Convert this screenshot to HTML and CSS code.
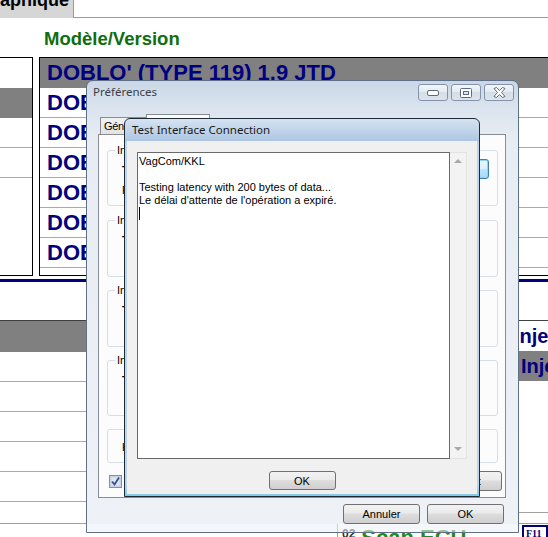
FILE: index.html
```html
<!DOCTYPE html>
<html lang="fr">
<head>
  <meta charset="UTF-8" />
  <title>Préférences - Test Interface Connection</title>
  <link rel="stylesheet" href="styles.css">
</head>
<body>
  <div class="app">
    <div class="tabstrip">
      <div class="tab"><span>Graphique</span></div>
      <div class="tab-fill"></div>
    </div>

    <h2 class="section-title">Modèle/Version</h2>

    <div class="top-panels">
      <div class="side-list">
        <div class="row"></div>
        <div class="row grey"></div>
        <div class="row line"></div>
        <div class="row line"></div>
      </div>
      <div class="model-list">
        <div class="row grey">DOBLO' (TYPE 119) 1.9 JTD</div>
        <div class="row line">DOBLO' (TYPE 119) 1.9 JTD 8V</div>
        <div class="row line">DOBLO' (TYPE 119) 1.3 JTD</div>
        <div class="row line">DOBLO' (TYPE 119) 1.2 8V</div>
        <div class="row line">DOBLO' (TYPE 119) 1.4 8V</div>
        <div class="row line">DOBLO' (TYPE 119) 1.6 16V</div>
        <div class="row line">DOBLO' (TYPE 119) 1.9 D</div>
      </div>
    </div>

    <div class="rule"></div>

    <div class="bottom-panels">
      <div class="side-list lower">
        <div class="row grey"></div>
        <div class="row line"></div>
        <div class="row line"></div>
        <div class="row line"></div>
        <div class="row line"></div>
        <div class="row line"></div>
      </div>
      <div class="inj-list">
        <div class="row first">Injection</div>
        <div class="row grey">Injection</div>
      </div>
    </div>

    <div class="footer">
      <div class="foot-cell"></div>
      <div class="foot-num">02</div>
      <div class="foot-scan">Scan ECU</div>
      <div class="foot-key">F11</div>
    </div>

    <!-- Préférences -->
    <div class="win prefs">
      <div class="titlebar">
        <span class="title">Préférences</span>
        <div class="caption-btns">
          <span class="cap-btn">
            <svg width="12" height="6" viewBox="0 0 12 6"><rect x="0.5" y="0.5" width="11" height="5" rx="1.5" fill="#fff" stroke="#5d6b80"/></svg>
          </span>
          <span class="cap-btn">
            <svg width="12" height="10" viewBox="0 0 12 10"><rect x="0.5" y="0.5" width="11" height="9" rx="1" fill="#fff" stroke="#5d6b80"/><rect x="3.5" y="3.5" width="5" height="3" fill="#dfe6ee" stroke="#5d6b80"/></svg>
          </span>
          <span class="cap-btn">
            <svg width="13" height="11" viewBox="0 0 13 11"><path d="M1 1.5 L3.5 0.5 L6.5 3.5 L9.5 0.5 L12 1.5 L8.5 5.5 L12 9.5 L9.5 10.5 L6.5 7.5 L3.5 10.5 L1 9.5 L4.5 5.5 Z" fill="#fff" stroke="#5d6b80" stroke-linejoin="round"/></svg>
          </span>
        </div>
      </div>

      <div class="prefs-body">
        <div class="tab-head">
          <span class="ptab">Général</span>
          <span class="ptab active">Interface</span>
        </div>
        <div class="tab-panel">
          <fieldset class="group g1">
            <legend>Interface</legend>
            <div class="group-body">
              <div class="fields">
                <div class="field strong">Type</div>
                <div class="field">Port</div>
              </div>
              <button class="btn focus">Tester</button>
            </div>
          </fieldset>
          <fieldset class="group g2">
            <legend>Interface</legend>
            <div class="fields">
              <div class="field strong">Temps</div>
            </div>
          </fieldset>
          <fieldset class="group g3">
            <legend>Interface</legend>
            <div class="fields">
              <div class="field strong">Temps</div>
            </div>
          </fieldset>
          <fieldset class="group g4">
            <legend>Interface</legend>
            <div class="fields">
              <div class="field strong">Temps</div>
            </div>
          </fieldset>
          <div class="group g5">
            <div class="field">K-Line</div>
          </div>
          <div class="panel-foot">
            <span class="check">
              <svg width="13" height="13" viewBox="0 0 13 13"><rect x="0.5" y="0.5" width="12" height="12" fill="#c9d2e3" stroke="#8e8f8f"/><rect x="2.5" y="2.5" width="8" height="8" fill="#dfe5ef"/><path d="M3 6.5 L5.5 9.5 L10 2.5" fill="none" stroke="#2d4f9e" stroke-width="1.8"/></svg>
            </span>
            <button class="btn">Défaut</button>
          </div>
        </div>
        <div class="dlg-buttons">
          <button class="btn">Annuler</button>
          <button class="btn">OK</button>
        </div>
      </div>
    </div>

    <!-- Test Interface Connection -->
    <div class="win test">
      <div class="titlebar test-title">Test Interface Connection</div>
      <div class="test-body">
        <div class="log">
          <div class="log-text">
            <div>VagCom/KKL</div>
            <div>&nbsp;</div>
            <div>Testing latency with 200 bytes of data...</div>
            <div>Le délai d'attente de l'opération a expiré.</div>
            <div class="caret"></div>
          </div>
          <div class="log-scroll">
            <span class="arrow up"></span>
            <span class="arrow down"></span>
          </div>
        </div>
        <button class="btn ok-btn">OK</button>
      </div>
    </div>
  </div>
</body>
</html>
```

FILE: styles.css
```css
* {
  box-sizing: border-box;
}
body {
  margin: 0;
  background: #fff;
  font-family: "Liberation Sans", Arial, sans-serif;
}
.app {
  position: relative;
  width: 548px;
  height: 537px;
  overflow: hidden;
  background: #fff;
}

/* background application */
.tabstrip {
  display: flex;
  height: 18px;
}
.tab {
  width: 74px;
  background: #d6d6d6;
  border-right: 1px solid #9a9a9a;
  display: flex;
  justify-content: flex-end;
  overflow: hidden;
  padding-right: 4px;
}
.tab span {
  flex-shrink: 0;
  font-size: 18px;
  font-weight: bold;
  line-height: 18px;
  margin-top: -9px;
  white-space: nowrap;
}
.tab-fill {
  flex: 1;
  border-bottom: 1px solid #9a9a9a;
}
.section-title {
  margin: 10px 0 7px 44px;
  font-size: 18.5px;
  line-height: 22px;
  color: #0f6e0f;
}
.top-panels {
  display: flex;
  gap: 6px;
  height: 219px;
}
.side-list {
  width: 33px;
  flex-shrink: 0;
  border: 1px solid #000;
  border-left: none;
  overflow: hidden;
}
.model-list {
  width: 540px;
  flex-shrink: 0;
  border: 1px solid #000;
  overflow: hidden;
}
.row {
  height: 30px;
}
.row.line {
  border-bottom: 1px solid #a9a9a9;
}
.grey {
  background: #808080;
}
.model-list .row {
  padding-left: 7px;
  font-size: 22px;
  font-weight: bold;
  color: #000080;
  line-height: 29px;
  white-space: nowrap;
}
.model-list .row.grey {
  line-height: 30px;
}
.rule {
  height: 3px;
  margin-top: 3px;
  background: #000080;
}
.bottom-panels {
  display: flex;
  height: 203px;
  margin-top: 38px;
  border-top: 1px solid #404040;
}
.side-list.lower {
  width: 338px;
  border: none;
}
.side-list.lower .row.grey {
  height: 31px;
}
.inj-list {
  flex: 1;
  border-bottom: 1px solid #a0a0a0;
  margin-bottom: 10px;
}
.inj-list .row {
  font-size: 20px;
  font-weight: bold;
  color: #000080;
  line-height: 30px;
  white-space: nowrap;
  padding-left: 176px;
}
.inj-list .row.grey {
  padding-left: 183px;
}
.footer {
  display: flex;
  height: 14px;
  border-top: 1px solid #a0a0a0;
}
.foot-cell {
  width: 338px;
  border-right: 1px solid #a0a0a0;
}
.foot-num {
  font-size: 12px;
  font-weight: bold;
  padding: 3px 2px 0 4px;
  color: #333;
}
.foot-scan {
  font-size: 22px;
  font-weight: bold;
  color: #1c8a1c;
  padding: 3px 0 0 4px;
  line-height: 22px;
  white-space: nowrap;
}
.foot-key {
  margin-left: auto;
  margin-top: 1px;
  width: 26px;
  border: 2px solid #000080;
  border-bottom: none;
  font-family: "Liberation Serif", serif;
  font-size: 10px;
  font-weight: bold;
  color: #000080;
  padding: 1px 0 0 2px;
}

/* windows */
.win {
  position: absolute;
  display: flex;
  flex-direction: column;
}
.titlebar {
  display: flex;
  align-items: flex-start;
  font-family: "Noto Sans", sans-serif;
  font-size: 11.5px;
  white-space: nowrap;
}
.prefs {
  left: 86px;
  top: 80px;
  width: 433px;
  height: 453px;
  border: 1px solid #5f6f85;
  border-radius: 7px 7px 0 0;
  background: linear-gradient(#cad7e6, #d9e3ee 24px, #e8edf3 60px, #eef1f5 443px, rgba(236, 240, 245, 0.55) 443px);
}
.prefs .titlebar {
  height: 24px;
  padding: 0 4px 0 6px;
}
.prefs .title {
  margin-top: 3px;
  color: #3a3f47;
}
.caption-btns {
  margin-left: auto;
  margin-top: 3px;
  display: flex;
  gap: 3px;
}
.cap-btn {
  width: 30px;
  height: 17px;
  border: 1px solid #8393aa;
  border-radius: 3px;
  background: linear-gradient(#f3f6f9, #e3e9f0 50%, #d5dde7 50%, #dde4ec);
  display: flex;
  align-items: center;
  justify-content: center;
}
.prefs-body {
  flex: 1;
  padding: 9px 12px 0 11px;
}
.tab-head {
  display: flex;
  align-items: flex-end;
  height: 20px;
  padding-left: 2px;
  font-size: 11px;
}
.ptab {
  height: 17px;
  width: 46px;
  padding: 2px 0 0 3px;
  border: 1px solid #898c95;
  border-bottom: none;
  background: linear-gradient(#f2f2f2, #e3e3e3);
  white-space: nowrap;
  overflow: hidden;
  letter-spacing: -0.3px;
}
.ptab.active {
  width: 64px;
  height: 21px;
  margin-bottom: -1px;
  background: #fcfcfc;
  position: relative;
}
.tab-panel {
  height: 364px;
  border: 1px solid #898c95;
  background: #fcfcfc;
  padding: 9px 7px 0 8px;
  font-size: 11px;
}
.group {
  margin: 0;
  padding: 0 0 0 14px;
  border: 1px solid #d5dfe5;
  border-radius: 3px;
  min-width: 0;
}
.group legend {
  padding: 0 2px;
  margin-left: -7px;
  line-height: 13px;
}
.g1 { height: 62px; }
.g2 { height: 63px; margin-top: 8px; }
.g3 { height: 63px; margin-top: 7px; }
.g4 { height: 62px; margin-top: 7px; }
.g5 {
  height: 34px;
  margin-top: 13px;
  padding-top: 11px;
}
.group-body {
  display: flex;
  justify-content: space-between;
  align-items: flex-start;
}
.field {
  line-height: 13px;
  margin-top: 7px;
}
.g5 .field {
  margin-top: 0;
}
.field.strong {
  font-weight: bold;
}
.panel-foot {
  display: flex;
  align-items: center;
  justify-content: space-between;
  margin-top: 8px;
  padding-left: 2px;
  margin-right: -4px;
}
.check {
  display: flex;
}
.btn {
  height: 20px;
  min-width: 66px;
  border: 1px solid #707070;
  border-radius: 3px;
  background: linear-gradient(#f2f2f2, #ebebeb 45%, #dddddd 50%, #cfcfcf);
  font-family: "Liberation Sans", Arial, sans-serif;
  font-size: 11px;
  color: #000;
  padding: 0;
}
.btn.focus {
  width: 75px;
  margin: 2px 8px 0 0;
  border-color: #3c7fb1;
  background: linear-gradient(#eaf6fd, #d9f0fc 50%, #bee6fd 50%, #a7d9f5);
  box-shadow: inset 0 0 0 1px #8ed4f5;
}
.panel-foot .btn {
  width: 75px;
  height: 20px;
}
.dlg-buttons {
  display: flex;
  justify-content: flex-end;
  gap: 7px;
  margin-top: 6px;
  padding-right: 2px;
}
.dlg-buttons .btn {
  width: 77px;
  height: 20px;
}

/* test dialog */
.test {
  left: 124px;
  top: 118px;
  width: 356px;
  height: 379px;
  border: 1px solid #1f2a38;
  border-radius: 6px 6px 0 0;
  padding: 0 2px 2px;
  background: linear-gradient(#d6e3f1, #adc6e2 22px, #bcd5ec 23px, #bcd5ec 97%, #7fcbe6);
}
.test-title {
  height: 22px;
  padding: 3px 0 0 5px;
  color: #1a1a1a;
}
.test-body {
  flex: 1;
  background: #f0f0f0;
  padding: 11px 10px 0;
  display: flex;
  flex-direction: column;
  align-items: center;
}
.log {
  align-self: stretch;
  height: 307px;
  display: flex;
}
.log-text {
  flex: 1;
  background: #fff;
  border: 1px solid #6a6a6a;
  padding: 2px 1px;
  font-size: 11px;
  line-height: 13px;
  color: #000;
}
.caret {
  width: 1px;
  height: 13px;
  background: #000;
}
.log-scroll {
  width: 17px;
  background: #f3f3f3;
  border: 1px solid #e2e2e2;
  border-left: none;
  display: flex;
  flex-direction: column;
  justify-content: space-between;
  align-items: center;
  padding: 6px 0 7px;
}
.arrow {
  width: 0;
  height: 0;
  border-left: 4px solid transparent;
  border-right: 4px solid transparent;
}
.arrow.up {
  border-bottom: 4px solid #a9a9a9;
}
.arrow.down {
  border-top: 4px solid #a9a9a9;
}
.ok-btn {
  margin-top: 12px;
  width: 67px;
  height: 19px;
}
```
